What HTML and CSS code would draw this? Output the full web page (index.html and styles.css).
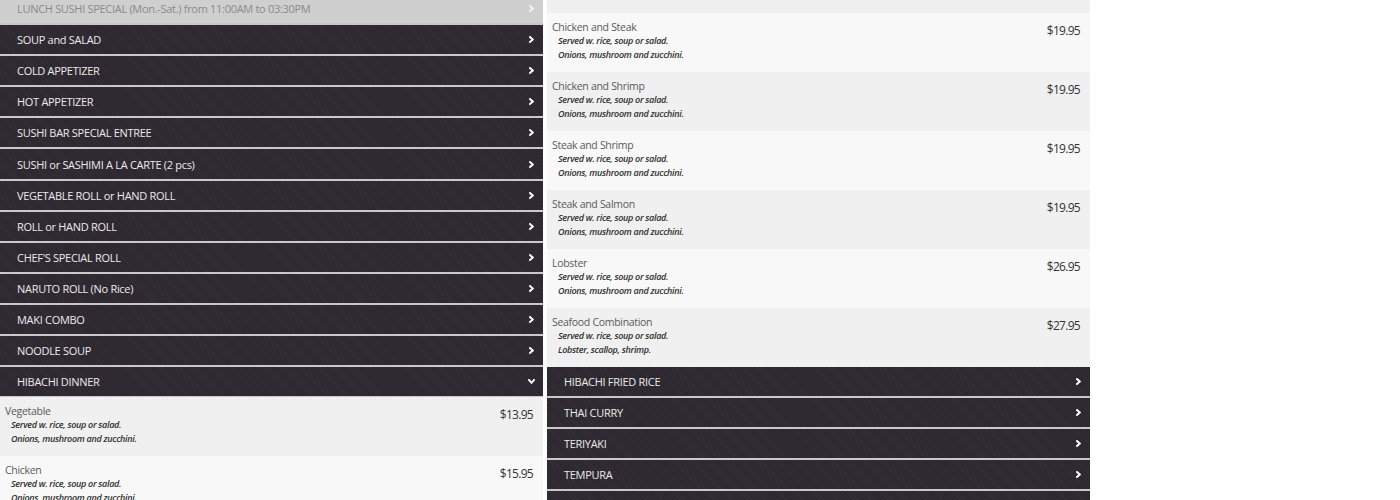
FILE: index.html
```html
<!DOCTYPE html>
<html>
<head>
<meta charset="utf-8">
<link rel="stylesheet" href="styles.css">
</head>
<body>
<div class="page">
  <div class="col col-left">
    <div class="bar bar-light"><span>LUNCH SUSHI SPECIAL (Mon.-Sat.) from 11:00AM to 03:30PM</span><svg class="chev" viewBox="0 0 5 7"><path d="M1 1 L3.8 3.5 L1 6" /></svg></div>
    <div class="bar"><span>SOUP and SALAD</span><svg class="chev" viewBox="0 0 5 7"><path d="M1 1 L3.8 3.5 L1 6" /></svg></div>
    <div class="bar"><span>COLD APPETIZER</span><svg class="chev" viewBox="0 0 5 7"><path d="M1 1 L3.8 3.5 L1 6" /></svg></div>
    <div class="bar"><span>HOT APPETIZER</span><svg class="chev" viewBox="0 0 5 7"><path d="M1 1 L3.8 3.5 L1 6" /></svg></div>
    <div class="bar"><span>SUSHI BAR SPECIAL ENTREE</span><svg class="chev" viewBox="0 0 5 7"><path d="M1 1 L3.8 3.5 L1 6" /></svg></div>
    <div class="bar"><span>SUSHI or SASHIMI A LA CARTE (2 pcs)</span><svg class="chev" viewBox="0 0 5 7"><path d="M1 1 L3.8 3.5 L1 6" /></svg></div>
    <div class="bar"><span>VEGETABLE ROLL or HAND ROLL</span><svg class="chev" viewBox="0 0 5 7"><path d="M1 1 L3.8 3.5 L1 6" /></svg></div>
    <div class="bar"><span>ROLL or HAND ROLL</span><svg class="chev" viewBox="0 0 5 7"><path d="M1 1 L3.8 3.5 L1 6" /></svg></div>
    <div class="bar"><span>CHEF'S SPECIAL ROLL</span><svg class="chev" viewBox="0 0 5 7"><path d="M1 1 L3.8 3.5 L1 6" /></svg></div>
    <div class="bar"><span>NARUTO ROLL (No Rice)</span><svg class="chev" viewBox="0 0 5 7"><path d="M1 1 L3.8 3.5 L1 6" /></svg></div>
    <div class="bar"><span>MAKI COMBO</span><svg class="chev" viewBox="0 0 5 7"><path d="M1 1 L3.8 3.5 L1 6" /></svg></div>
    <div class="bar"><span>NOODLE SOUP</span><svg class="chev" viewBox="0 0 5 7"><path d="M1 1 L3.8 3.5 L1 6" /></svg></div>
    <div class="bar bar-open"><span>HIBACHI DINNER</span><svg class="chev chev-down" viewBox="0 0 7 5"><path d="M1 1 L3.5 3.8 L6 1" /></svg></div>
    <div class="items">
      <div class="item dark">
        <div class="info"><div class="name">Vegetable</div><div class="desc">Served w. rice, soup or salad.<br>Onions, mushroom and zucchini.</div></div>
        <div class="price">$13.95</div>
      </div>
      <div class="item light">
        <div class="info"><div class="name">Chicken</div><div class="desc">Served w. rice, soup or salad.<br>Onions, mushroom and zucchini.</div></div>
        <div class="price">$15.95</div>
      </div>
    </div>
  </div>
  <div class="col col-right">
    <div class="items">
      <div class="item dark">
        <div class="info"><div class="name">Scallop</div><div class="desc">Served w. rice, soup or salad.<br>Onions, mushroom and zucchini.</div></div>
        <div class="price">$19.95</div>
      </div>
      <div class="item light">
        <div class="info"><div class="name">Chicken and Steak</div><div class="desc">Served w. rice, soup or salad.<br>Onions, mushroom and zucchini.</div></div>
        <div class="price">$19.95</div>
      </div>
      <div class="item dark">
        <div class="info"><div class="name">Chicken and Shrimp</div><div class="desc">Served w. rice, soup or salad.<br>Onions, mushroom and zucchini.</div></div>
        <div class="price">$19.95</div>
      </div>
      <div class="item light">
        <div class="info"><div class="name">Steak and Shrimp</div><div class="desc">Served w. rice, soup or salad.<br>Onions, mushroom and zucchini.</div></div>
        <div class="price">$19.95</div>
      </div>
      <div class="item dark">
        <div class="info"><div class="name">Steak and Salmon</div><div class="desc">Served w. rice, soup or salad.<br>Onions, mushroom and zucchini.</div></div>
        <div class="price">$19.95</div>
      </div>
      <div class="item light">
        <div class="info"><div class="name">Lobster</div><div class="desc">Served w. rice, soup or salad.<br>Onions, mushroom and zucchini.</div></div>
        <div class="price">$26.95</div>
      </div>
      <div class="item dark">
        <div class="info"><div class="name">Seafood Combination</div><div class="desc">Served w. rice, soup or salad.<br>Lobster, scallop, shrimp.</div></div>
        <div class="price">$27.95</div>
      </div>
    </div>
    <div class="bar"><span>HIBACHI FRIED RICE</span><svg class="chev" viewBox="0 0 5 7"><path d="M1 1 L3.8 3.5 L1 6" /></svg></div>
    <div class="bar"><span>THAI CURRY</span><svg class="chev" viewBox="0 0 5 7"><path d="M1 1 L3.8 3.5 L1 6" /></svg></div>
    <div class="bar"><span>TERIYAKI</span><svg class="chev" viewBox="0 0 5 7"><path d="M1 1 L3.8 3.5 L1 6" /></svg></div>
    <div class="bar"><span>TEMPURA</span><svg class="chev" viewBox="0 0 5 7"><path d="M1 1 L3.8 3.5 L1 6" /></svg></div>
    <div class="bar"><span>BENTO BOX</span><svg class="chev" viewBox="0 0 5 7"><path d="M1 1 L3.8 3.5 L1 6" /></svg></div>
  </div>
</div>
</body>
</html>
```

FILE: styles.css
```css
html, body {
  margin: 0;
  padding: 0;
  background: #ffffff;
  overflow: hidden;
  height: 500px;
}

body {
  font-family: "Open Sans", "Liberation Sans", sans-serif;
}

.page {
  display: flex;
  gap: 4px;
  width: 1090px;
  align-items: flex-start;
}

.col {
  width: 543px;
  display: flex;
  flex-direction: column;
  background: #cbc8cb;
}

.col-left {
  margin-top: -6px;
}

.col-right {
  margin-top: -46px;
}

.bar {
  height: 29.1px;
  flex: none;
  display: flex;
  align-items: center;
  justify-content: space-between;
  padding: 0 9px 0 17px;
  background-color: #2d2830;
  background-image: repeating-linear-gradient(45deg, rgba(255,255,255,0.03) 0 1px, rgba(0,0,0,0) 1px 3px);
  color: #ece9ec;
  font-size: 11px;
  letter-spacing: -0.3px;
  box-sizing: border-box;
}

.bar + .bar {
  margin-top: 2px;
}

.bar + .items {
  margin-top: 1px;
}

.bar-light {
  background-color: #cfcfcf;
  background-image: none;
  color: #8a8a8a;
}

.chev {
  width: 5px;
  height: 7px;
  flex: none;
}

.chev path {
  fill: none;
  stroke: #ffffff;
  stroke-width: 1.9;
  stroke-linecap: square;
  stroke-linejoin: miter;
}

.chev-down {
  width: 7px;
  height: 5px;
  margin-right: -1px;
}

.bar-light .chev path {
  stroke: #f4f4f4;
}

.items {
  display: flex;
  flex-direction: column;
}

.item {
  height: 59px;
  box-sizing: border-box;
  padding: 7px 10px 0 5px;
  display: flex;
  justify-content: space-between;
  align-items: flex-start;
}

.item.dark {
  background: #f0f0f0;
}

.item.light {
  background: #f8f8f8;
}

.name {
  font-size: 10.5px;
  line-height: 14px;
  letter-spacing: -0.3px;
  color: #5a5a5a;
}

.desc {
  font-size: 9px;
  line-height: 14px;
  font-style: italic;
  font-weight: 600;
  color: #2e2e2e;
  padding-left: 6px;
  letter-spacing: -0.3px;
}

.price {
  font-size: 12px;
  line-height: 14px;
  letter-spacing: -0.7px;
  color: #333333;
  margin-top: 4px;
}
```
